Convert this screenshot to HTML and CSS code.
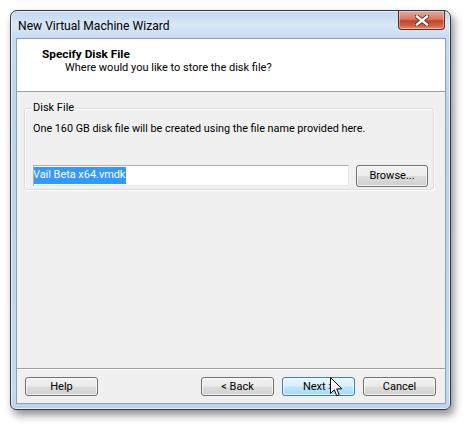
FILE: index.html
```html
<!DOCTYPE html>
<html>
<head>
<meta charset="utf-8">
<link rel="stylesheet" href="styles.css">
</head>
<body>
<div class="window">
  <div class="titlebar">
    <span class="title">New Virtual Machine Wizard</span>
    <div class="close">
      <svg width="14" height="11" viewBox="0 0 14 11"><path d="M2 1.5 L12 9.5 M12 1.5 L2 9.5" stroke="#5a1f14" stroke-width="4" stroke-linecap="square"/><path d="M2 1.5 L12 9.5 M12 1.5 L2 9.5" stroke="#ffffff" stroke-width="2.4" stroke-linecap="square"/></svg>
    </div>
  </div>
  <div class="client">
    <div class="header">
      <div class="h-title">Specify Disk File</div>
      <div class="h-sub">Where would you like to store the disk file?</div>
    </div>
    <div class="body">
      <div class="group">
        <div class="legend">Disk File</div>
        <div class="desc">One 160 GB disk file will be created using the file name provided here.</div>
        <div class="filerow">
          <div class="input"><span class="sel">Vail Beta x64.vmdk</span></div>
          <div class="btn browse">Browse...</div>
        </div>
      </div>
    </div>
    <div class="footer">
      <div class="btn">Help</div>
      <div class="spacer"></div>
      <div class="btn">&lt; Back</div>
      <div class="btn hover">Next &gt;</div>
      <div class="btn">Cancel</div>
    </div>
  </div>
  <svg class="cursor" width="13" height="21" viewBox="0 0 13 21"><path d="M0.5 0.5 L0.5 16.5 L4.3 12.8 L6.8 18.8 L9.2 17.8 L6.7 11.9 L11.8 11.9 Z" fill="#ffffff" stroke="#000000" stroke-width="1" stroke-linejoin="miter"/></svg>
</div>
</body>
</html>
```
FILE: styles.css
```css
* { box-sizing: border-box; }
html, body { margin: 0; padding: 0; background: #ffffff; }
body {
  font-family: "Roboto", "Liberation Sans", sans-serif;
  font-size: 11px;
  color: #000;
  width: 470px;
  height: 429px;
  overflow: hidden;
}
.window {
  position: relative;
  margin: 10px 0 0 10px;
  width: 441px;
  height: 400px;
  border: 1px solid #2f3b48;
  border-radius: 7px 7px 6px 6px;
  background: linear-gradient(180deg, #c3d7ef 0px, #d9e7f6 14px, #c7dbf1 28px, #bed3ec 120px, #c6d9ee 380px, #bcd2ea 400px);
  box-shadow: 3px 5px 9px rgba(0,0,0,0.45), inset 0 0 0 1px rgba(255,255,255,0.6);
  padding: 0 4px 5px 5px;
  display: flex;
  flex-direction: column;
}
.titlebar {
  height: 27px;
  display: flex;
  align-items: flex-start;
  position: relative;
}
.title {
  padding: 8px 0 0 2px;
  font-size: 12.1px;
  line-height: 14px;
  color: #000;
}
.close {
  position: absolute;
  right: 1px;
  top: 0;
  width: 47px;
  height: 19px;
  border: 1px solid #5b2a24;
  border-top: none;
  border-radius: 0 0 4px 4px;
  background: linear-gradient(180deg, #e8a89a 0%, #d77a65 45%, #c0432b 55%, #d4664c 85%, #e2957f 100%);
  box-shadow: inset 0 0 0 1px rgba(255,230,220,0.45);
  display: flex;
  align-items: center;
  justify-content: center;
}
.client {
  flex: 1;
  border: 1px solid #8aa0b8;
  background: #f0f0f0;
  display: flex;
  flex-direction: column;
}
.header {
  height: 53px;
  background: #ffffff;
  border-bottom: 1px solid #a0a0a0;
  padding: 8px 0 0 25px;
}
.h-title {
  font-weight: bold;
  font-size: 11.8px;
  line-height: 14px;
}
.h-sub {
  padding-left: 23px;
  line-height: 13px;
  font-size: 11px;
}
.body {
  flex: 1;
  padding: 16px 11px 0 7px;
}
.group {
  position: relative;
  height: 82px;
  border: 1px solid #dcdcdc;
  border-radius: 3px;
  box-shadow: 1px 1px 0 #ffffff, inset 1px 1px 0 #ffffff;
  padding: 8px 0 0 8px;
}
.legend {
  position: absolute;
  left: 7px;
  top: -8px;
  padding: 0 1px;
  background: #f0f0f0;
  line-height: 14px;
}
.desc {
  line-height: 14px;
  padding-top: 5px;
  font-size: 10.8px;
}
.filerow {
  display: flex;
  align-items: flex-start;
  gap: 7px;
  margin-top: 29px;
}
.input {
  width: 316px;
  height: 21px;
  background: #ffffff;
  border: 1px solid #abadb3;
  border-top-color: #aeb0b6;
  border-right-color: #e3e9ef;
  border-bottom-color: #e3e9ef;
  padding: 1px 0 0 0;
  overflow: hidden;
  white-space: nowrap;
  font-size: 10.9px;
}
.sel {
  display: inline-block;
  background: #3399ff;
  color: #ffffff;
  line-height: 16px;
  height: 17px;
  padding: 0 1px 0 0;
  text-indent: -1px;
}
.btn {
  width: 73px;
  height: 19px;
  border: 1px solid #707070;
  border-radius: 3px;
  background: linear-gradient(180deg, #f2f2f2 0%, #ebebeb 48%, #dddddd 52%, #cfcfcf 100%);
  box-shadow: inset 0 0 0 1px rgba(255,255,255,0.7);
  display: flex;
  align-items: center;
  justify-content: center;
  line-height: 14px;
}
.btn.browse {
  height: 22px;
  width: 72px;
}
.btn.hover {
  border-color: #3c7fb1;
  background: linear-gradient(180deg, #eaf6fd 0%, #d9f0fc 48%, #bee6fd 52%, #a7d9f5 100%);
}
.footer {
  height: 35px;
  border-top: 1px solid #a0a0a0;
  box-shadow: inset 0 1px 0 #ffffff;
  display: flex;
  align-items: flex-start;
  padding: 8px 9px 0 8px;
  gap: 8px;
}
.spacer { flex: 1; }
.cursor {
  position: absolute;
  left: 319px;
  top: 366px;
}
```
